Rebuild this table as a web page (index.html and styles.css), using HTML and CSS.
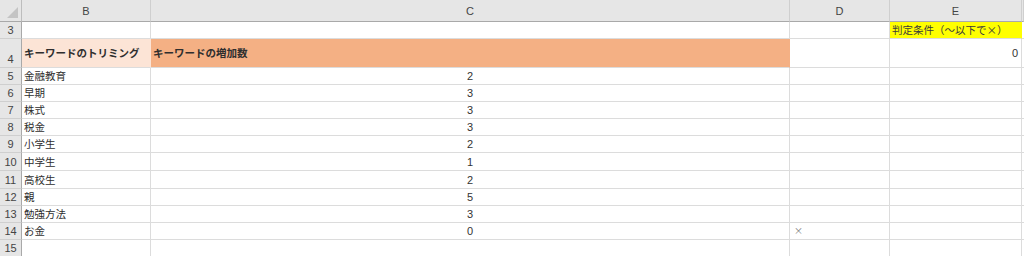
FILE: index.html
```html
<!DOCTYPE html>
<html lang="ja">
<head>
<meta charset="utf-8">
<link rel="stylesheet" href="styles.css">
</head>
<body>
<div class="sheet">
  <div class="ch corner"><span class="tri"></span></div>
  <div class="ch">B</div>
  <div class="ch">C</div>
  <div class="ch">D</div>
  <div class="ch">E</div>
  <div class="ch last"></div>

  <div class="rh">3</div>
  <div class="c"></div>
  <div class="c"></div>
  <div class="c"></div>
  <div class="c yellow">判定条件（～以下で×）</div>
  <div class="c last"></div>

  <div class="rh">4</div>
  <div class="c peach b">キーワードのトリミング</div>
  <div class="c salmon b">キーワードの増加数</div>
  <div class="c"></div>
  <div class="c num">0</div>
  <div class="c last"></div>

  <div class="rh">5</div><div class="c">金融教育</div><div class="c mid">2</div><div class="c"></div><div class="c"></div><div class="c last"></div>
  <div class="rh">6</div><div class="c">早期</div><div class="c mid">3</div><div class="c"></div><div class="c"></div><div class="c last"></div>
  <div class="rh">7</div><div class="c">株式</div><div class="c mid">3</div><div class="c"></div><div class="c"></div><div class="c last"></div>
  <div class="rh">8</div><div class="c">税金</div><div class="c mid">3</div><div class="c"></div><div class="c"></div><div class="c last"></div>
  <div class="rh">9</div><div class="c">小学生</div><div class="c mid">2</div><div class="c"></div><div class="c"></div><div class="c last"></div>
  <div class="rh">10</div><div class="c">中学生</div><div class="c mid">1</div><div class="c"></div><div class="c"></div><div class="c last"></div>
  <div class="rh">11</div><div class="c">高校生</div><div class="c mid">2</div><div class="c"></div><div class="c"></div><div class="c last"></div>
  <div class="rh">12</div><div class="c">親</div><div class="c mid">5</div><div class="c"></div><div class="c"></div><div class="c last"></div>
  <div class="rh">13</div><div class="c">勉強方法</div><div class="c mid">3</div><div class="c"></div><div class="c"></div><div class="c last"></div>
  <div class="rh">14</div><div class="c">お金</div><div class="c mid">0</div><div class="c small">×</div><div class="c"></div><div class="c last"></div>
  <div class="rh">15</div><div class="c"></div><div class="c"></div><div class="c"></div><div class="c"></div><div class="c last"></div>
</div>
</body>
</html>
```

FILE: styles.css
```css
* { box-sizing: border-box; }
html, body { margin: 0; padding: 0; background: #fff; }
body { width: 1024px; height: 256px; overflow: hidden; }

.sheet {
  display: grid;
  grid-template-columns: 22px 129px 639px 100px 132px 2px;
  grid-template-rows: 22px 17px 29px repeat(5, 17px) 18px 18px repeat(4, 17px);
  font-family: "Noto Sans CJK JP", "Liberation Sans", sans-serif;
  font-size: 10.5px;
  color: #2e2e2e;
}

.ch {
  background: #e6e6e6;
  border-right: 1px solid #cfcfcf;
  border-bottom: 1px solid #a9a9a9;
  display: flex;
  align-items: center;
  justify-content: center;
  font-family: "Liberation Sans", sans-serif;
  font-size: 11px;
  color: #444;
  padding-top: 1px;
}
.corner { position: relative; border-right-color: #bdbdbd; }
.tri {
  position: absolute;
  right: 3px;
  bottom: 3px;
  width: 0;
  height: 0;
  border-left: 11px solid transparent;
  border-bottom: 11px solid #c4c4c4;
}

.rh {
  background: #e6e6e6;
  border-right: 1px solid #a9a9a9;
  border-bottom: 1px solid #cfcfcf;
  display: flex;
  align-items: flex-end;
  justify-content: center;
  font-family: "Liberation Sans", sans-serif;
  font-size: 11px;
  color: #444;
  padding-bottom: 1px;
  line-height: 14px;
}

.c {
  border-right: 1px solid #dcdcdc;
  border-bottom: 1px solid #dcdcdc;
  display: flex;
  align-items: center;
  padding: 0 2px;
  white-space: nowrap;
  overflow: hidden;
  line-height: 16px;
}
.c.last { border-right: none; }

.peach { background: #fce4d6; border-right-color: #fce4d6; }
.salmon { background: #f4b084; border-right-color: #f4b084; }
.yellow { background: #ffff00; color: #3a3a3a; border-right-color: #ffff00; padding-left: 2px; }
.b { font-weight: bold; }

.mid {
  justify-content: center;
  font-family: "Liberation Sans", sans-serif;
  font-size: 11px;
  color: #333;
}
.num {
  justify-content: flex-end;
  font-family: "Liberation Sans", sans-serif;
  font-size: 11px;
  color: #333;
  padding-right: 3px;
}
.small {
  font-size: 9px;
  color: #777;
  padding-left: 4px;
}
```
